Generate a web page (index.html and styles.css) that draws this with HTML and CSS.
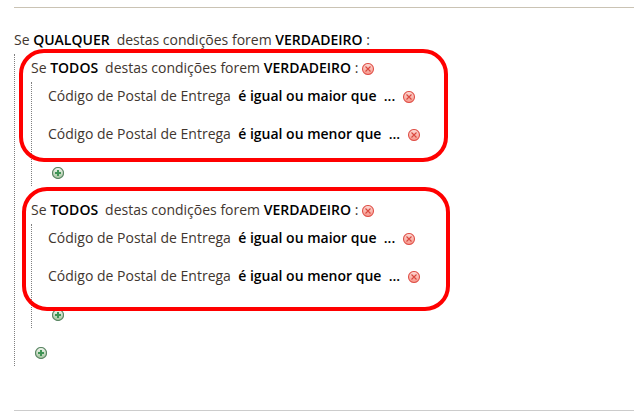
FILE: index.html
```html
<!DOCTYPE html>
<html lang="pt">
<head>
<meta charset="utf-8">
<title>Condições</title>
<link rel="stylesheet" href="styles.css">
</head>
<body>
<svg class="defs" aria-hidden="true">
  <defs>
    <linearGradient id="red" x1="0" y1="0" x2="0" y2="1"><stop offset="0" stop-color="#fddcd7"/><stop offset="1" stop-color="#f79488"/></linearGradient>
    <linearGradient id="green" x1="0" y1="0" x2="0" y2="1"><stop offset="0" stop-color="#f4f8f1"/><stop offset="1" stop-color="#a3c39d"/></linearGradient>
    <symbol id="remove" viewBox="0 0 12 12">
      <circle cx="6" cy="6" r="5.5" fill="url(#red)" stroke="#e0554d" stroke-width="1.1"/>
      <path d="M3.5 3.5l5 5M8.5 3.5l-5 5" stroke="#d9483f" stroke-width="1.1"/>
    </symbol>
    <symbol id="add" viewBox="0 0 12 12">
      <circle cx="6" cy="6" r="5.5" fill="url(#green)" stroke="#5c8765" stroke-width="1.2"/>
      <path d="M6 3v6M3 6h6" stroke="#3f9455" stroke-width="2"/>
    </symbol>
  </defs>
</svg>
<main class="fieldset">
  <div class="row">Se <b>QUALQUER</b><span class="after">destas condições forem <b>VERDADEIRO</b> :</span></div>
  <ul class="children">
    <li class="group first">
      <div class="row">Se <b>TODOS</b><span class="after">destas condições forem <b>VERDADEIRO</b> :</span><svg class="icon remove near"><use href="#remove"/></svg></div>
      <ul class="children">
        <li class="row">Código de Postal de Entrega<b class="after">é igual ou maior que</b><b class="after">...</b><svg class="icon remove"><use href="#remove"/></svg></li>
        <li class="row">Código de Postal de Entrega<b class="after">é igual ou menor que</b><b class="after">...</b><svg class="icon remove"><use href="#remove"/></svg></li>
        <li class="row"><svg class="icon add"><use href="#add"/></svg></li>
      </ul>
      <div class="highlight"></div>
    </li>
    <li class="group second">
      <div class="row">Se <b>TODOS</b><span class="after">destas condições forem <b>VERDADEIRO</b> :</span><svg class="icon remove near"><use href="#remove"/></svg></div>
      <ul class="children">
        <li class="row">Código de Postal de Entrega<b class="after">é igual ou maior que</b><b class="after">...</b><svg class="icon remove"><use href="#remove"/></svg></li>
        <li class="row">Código de Postal de Entrega<b class="after">é igual ou menor que</b><b class="after">...</b><svg class="icon remove"><use href="#remove"/></svg></li>
        <li class="row"><svg class="icon add"><use href="#add"/></svg></li>
      </ul>
      <div class="highlight"></div>
    </li>
    <li class="row"><svg class="icon add"><use href="#add"/></svg></li>
  </ul>
</main>
</body>
</html>
```

FILE: styles.css
```css
* { box-sizing: border-box; }
body {
  margin: 0;
  background: #fff;
  color: #41362f;
  font: 14px/28px "Open Sans", sans-serif;
  overflow: hidden;
}
.defs { position: absolute; width: 0; height: 0; }
.fieldset {
  margin: 7px 0 0 14px;
  height: 404px;
  padding-top: 18px;
  border-top: 1px solid #cac3b4;
  border-bottom: 1px solid #ccc;
}
.row { height: 28px; white-space: nowrap; }
b { font-weight: 600; color: #000; }
.after { margin-left: 7px; }
b.after { margin-left: 7.28px; }
.children {
  display: flex;
  flex-direction: column;
  gap: 10px;
  margin: 0;
  padding: 0 0 0 16px;
  border-left: 1px dotted #808080;
  list-style: none;
}
.group { position: relative; }
.icon { width: 12px; height: 12px; vertical-align: -2px; }
.remove { margin-left: 7.44px; }
.near { margin-left: 4px; }
.add { margin-left: 4px; }
.highlight {
  position: absolute;
  border: 4px solid #f00;
  border-radius: 25px;
  pointer-events: none;
}
.first .highlight { left: -12px; top: -5px; width: 429px; height: 113px; }
.second .highlight { left: -9px; top: -9px; width: 428px; height: 124px; }
```
